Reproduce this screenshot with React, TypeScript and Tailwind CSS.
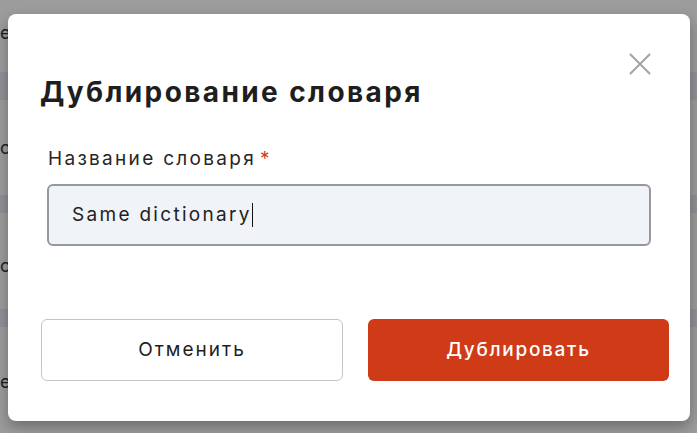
const Cross = () => (
  <svg width="22" height="22" viewBox="0 0 22 22" fill="none" stroke="currentColor" strokeWidth="2">
    <path d="M1 1 L21 21 M21 1 L1 21" />
  </svg>
);

export default function App() {
  return (
    <div
      className="relative h-[433px] w-[697px] overflow-hidden bg-[#9c9c9c]"
      style={{ fontFamily: "Inter, 'Noto Sans', sans-serif" }}
    >
      {/* page behind the overlay */}
      <div className="flex flex-col text-[18px] leading-[26px] text-[#1e1e1e]">
        <div className="h-[20px]" />
        <div className="h-[52px]">ел</div>
        <div className="h-[28px] bg-[#909198]" />
        <div className="h-[35px]" />
        <div className="h-[60px]">о</div>
        <div className="h-[18px] bg-[#909198]" />
        <div className="h-[40px]" />
        <div className="h-[56px]">о</div>
        <div className="h-[18px] bg-[#909198]" />
        <div className="h-[42px]" />
        <div className="h-[40px]">ел</div>
      </div>

      {/* dialog */}
      <div className="absolute left-[8px] top-[14px] flex h-[407px] w-[682px] flex-col rounded-[8px] bg-white shadow-[0_6px_14px_rgba(0,0,0,0.3)]">
        <button className="absolute left-[621px] top-[39px] text-[#a3a3a3]">
          <Cross />
        </button>

        <h2 className="ml-[32px] mt-[61px] text-[28px] font-bold leading-[34px] tracking-[2.4px] text-[#1e1e1e]">
          Дублирование словаря
        </h2>

        <label className="ml-[40px] mt-[38px] text-[19px] leading-[24px] tracking-[2.3px] text-[#262626]">
          Название словаря<span className="ml-[4px] text-[#d03a17]">*</span>
        </label>

        <div className="ml-[39px] mt-[13px] flex h-[62px] w-[604px] items-center rounded-[6px] border-2 border-[#96989d] bg-[#f0f3f8] px-[23px]">
          <span className="text-[19px] tracking-[2.3px] text-[#222]">Same dictionary</span>
          <span className="h-[24px] w-[1.5px] bg-[#111]" />
        </div>

        <div className="ml-[33px] mt-[73px] flex gap-[25px]">
          <button className="h-[62px] w-[302px] rounded-[6px] border border-[#c4c4cc] bg-white text-[19px] tracking-[2px] text-[#1e1e1e]">
            Отменить
          </button>
          <button className="h-[62px] w-[301px] rounded-[6px] bg-[#cf3b17] text-[19px] font-medium tracking-[1.7px] text-white">
            Дублировать
          </button>
        </div>
      </div>
    </div>
  );
}
